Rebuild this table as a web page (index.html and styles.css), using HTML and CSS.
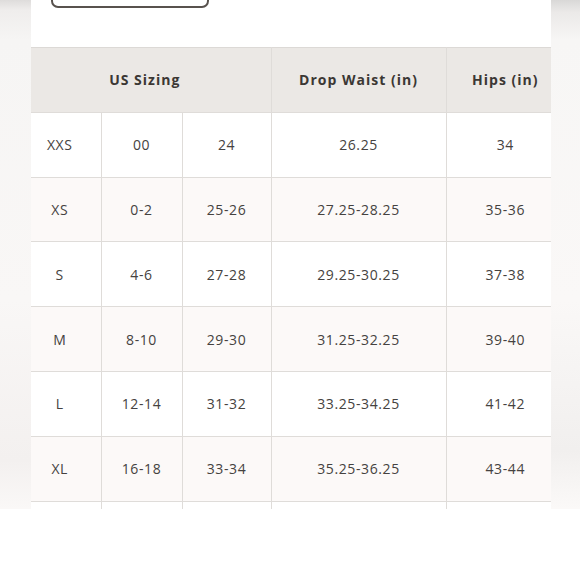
FILE: index.html
```html
<!DOCTYPE html>
<html>
<head>
<meta charset="utf-8">
<link rel="stylesheet" href="styles.css">
</head>
<body>
<div class="frame">
  <div class="edge edge-left"></div>
  <div class="content">
    <div class="top-btn"></div>
    <table class="chart">
      <colgroup>
        <col class="c1"><col class="c2"><col class="c3"><col class="c4"><col class="c5">
      </colgroup>
      <thead>
        <tr><th colspan="3">US Sizing</th><th>Drop Waist (in)</th><th>Hips (in)</th></tr>
      </thead>
      <tbody>
        <tr><td>XXS</td><td>00</td><td>24</td><td>26.25</td><td>34</td></tr>
        <tr class="alt"><td>XS</td><td>0-2</td><td>25-26</td><td>27.25-28.25</td><td>35-36</td></tr>
        <tr><td>S</td><td>4-6</td><td>27-28</td><td>29.25-30.25</td><td>37-38</td></tr>
        <tr class="alt"><td>M</td><td>8-10</td><td>29-30</td><td>31.25-32.25</td><td>39-40</td></tr>
        <tr><td>L</td><td>12-14</td><td>31-32</td><td>33.25-34.25</td><td>41-42</td></tr>
        <tr class="alt"><td>XL</td><td>16-18</td><td>33-34</td><td>35.25-36.25</td><td>43-44</td></tr>
        <tr class="cut"><td></td><td></td><td></td><td></td><td></td></tr>
      </tbody>
    </table>
  </div>
  <div class="edge edge-right"></div>
</div>
</body>
</html>
```
FILE: styles.css
```css
html, body {
  margin: 0;
  padding: 0;
  background: #ffffff;
}
body {
  width: 580px;
  height: 580px;
  overflow: hidden;
  font-family: "Open Sans", "Liberation Sans", sans-serif;
}
.frame {
  display: flex;
  height: 509px;
}
.edge {
  flex: none;
}
.edge-left {
  width: 31px;
  background: linear-gradient(180deg, #dedcdb 0px, #efedec 10px, #f6f5f4 40px, #f9f7f6 300px, #f3f0ef 460px, #faf8f7 509px);
}
.edge-right {
  width: 29px;
  background: linear-gradient(180deg, #d9d8d7 0px, #ebe9e8 12px, #f7f6f5 40px, #faf8f7 300px, #f1efee 450px, #fbf9f8 509px);
}
.content {
  flex: 1;
  background: #ffffff;
  overflow: hidden;
}
.top-btn {
  width: 154px;
  height: 28px;
  margin: -24px 0 0 20px;
  border: 2px solid #58524e;
  border-radius: 7px;
}
.chart {
  margin: 39px 0 0 -12px;
  width: 545px;
  border-collapse: collapse;
  table-layout: fixed;
  color: #454240;
}
.c1 { width: 82px; }
.c2 { width: 81px; }
.c3 { width: 89px; }
.c4 { width: 175px; }
.c5 { width: 118px; }
.chart th, .chart td {
  height: 63.8px;
  padding: 0;
  text-align: center;
  border: 1px solid #dfdcd9;
  font-size: 14px;
  letter-spacing: 0.6px;
}
.chart tr > :first-child { border-left: none; }
.chart tr > :last-child { border-right: none; }
.chart th {
  background: #ebe8e5;
  font-weight: 700;
  color: #3b3734;
  letter-spacing: 1px;
  border-top: 1px solid #dcd9d6;
}
.chart .alt td {
  background: #fcf9f8;
}
.chart .cut td {
  border-bottom: none;
}
```
